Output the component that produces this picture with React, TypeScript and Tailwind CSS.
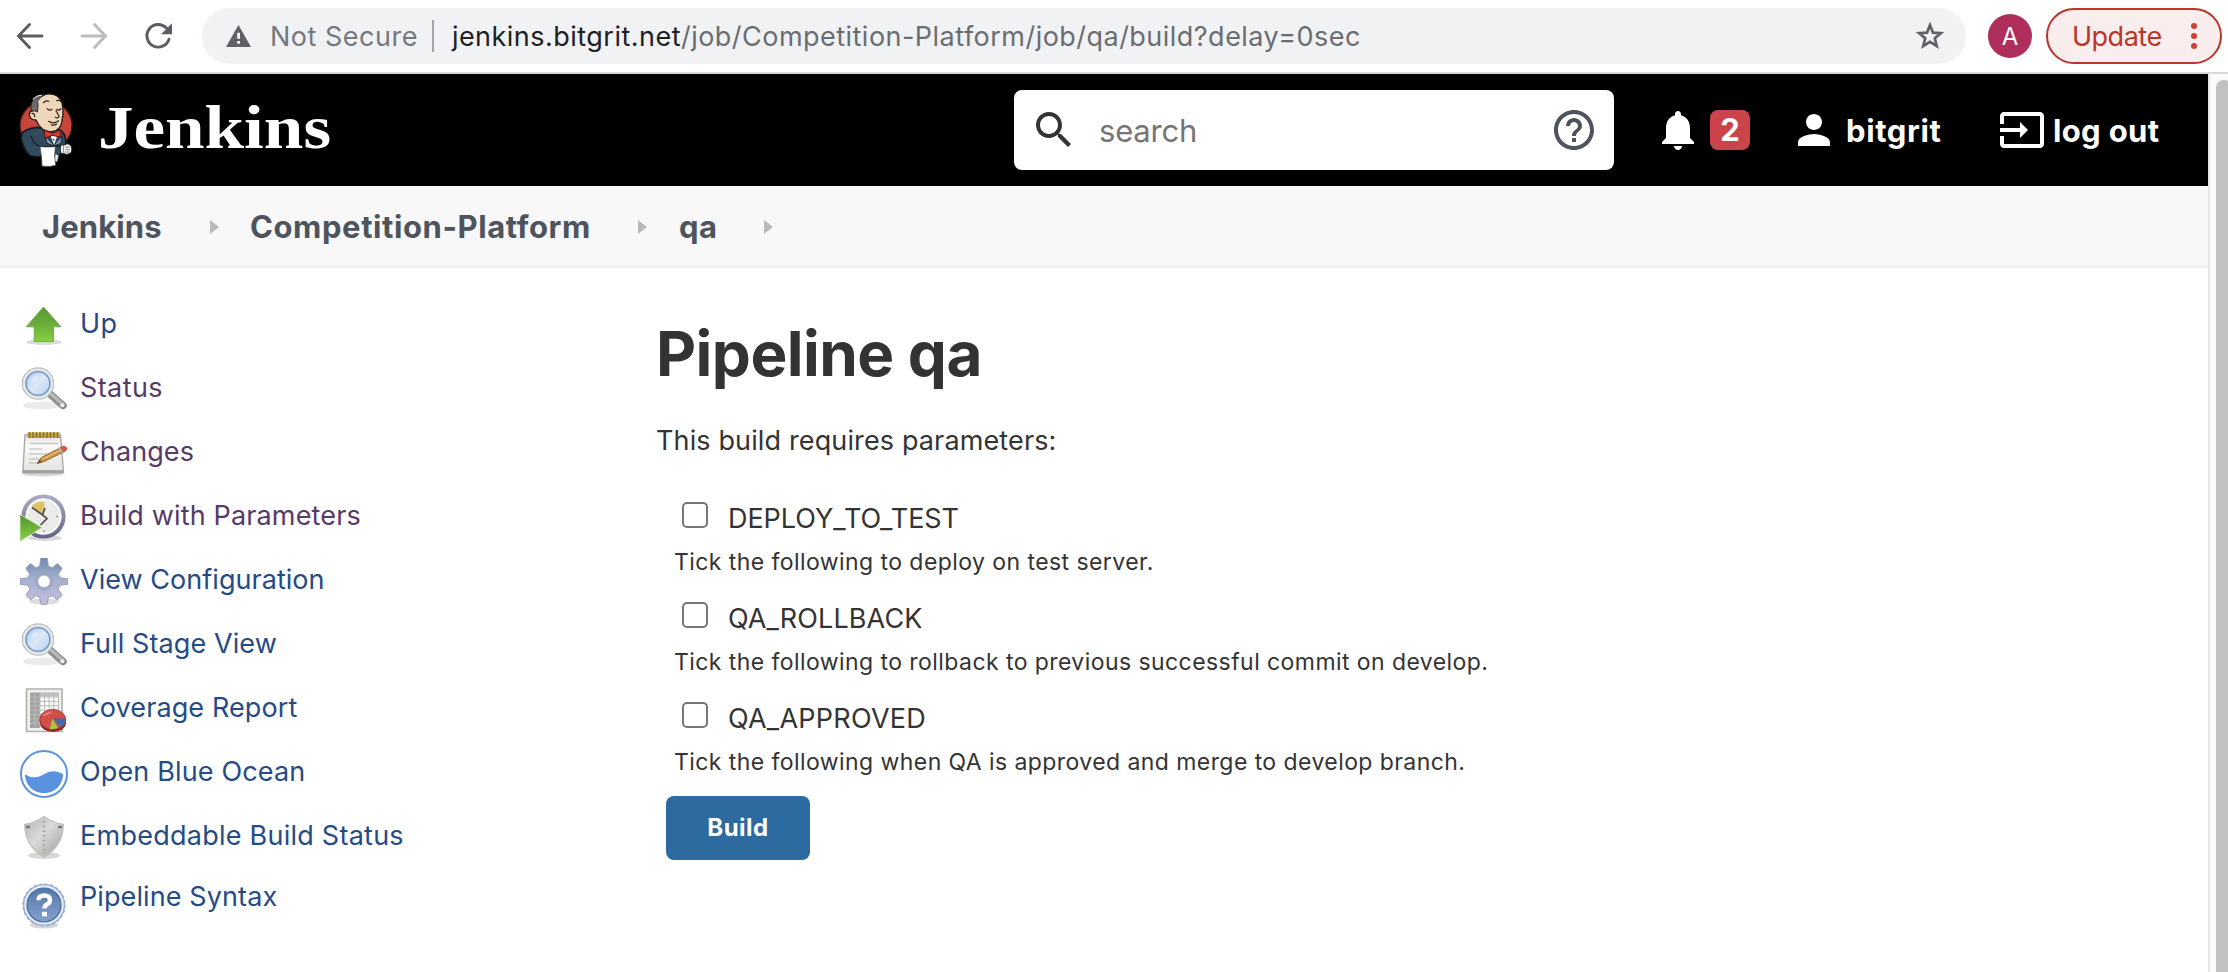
import React from 'react';

const P = {
  search:
    'M15.5 14h-.79l-.28-.27C15.41 12.59 16 11.11 16 9.5 16 5.91 13.09 3 9.5 3S3 5.91 3 9.5 5.91 16 9.5 16c1.61 0 3.09-.59 4.23-1.57l.27.28v.79l5 4.99L20.49 19l-4.99-5zm-6 0C7.01 14 5 11.99 5 9.5S7.01 5 9.5 5 14 7.01 14 9.5 11.99 14 9.5 14z',
  help: 'M11 18h2v-2h-2v2zm1-16C6.48 2 2 6.48 2 12s4.48 10 10 10 10-4.48 10-10S17.52 2 12 2zm0 18c-4.41 0-8-3.59-8-8s3.59-8 8-8 8 3.59 8 8-3.59 8-8 8zm0-14c-2.21 0-4 1.79-4 4h2c0-1.1.9-2 2-2s2 .9 2 2c0 2-3 1.75-3 5h2c0-2.25 3-2.5 3-5 0-2.21-1.79-4-4-4z',
  bell: 'M12 22c1.1 0 2-.9 2-2h-4c0 1.1.89 2 2 2zm6-6v-5c0-3.07-1.64-5.64-4.5-6.32V4c0-.83-.67-1.5-1.5-1.5s-1.5.67-1.5 1.5v.68C7.63 5.36 6 7.92 6 11v5l-2 2v1h16v-1l-2-2z',
  person:
    'M12 12c2.21 0 4-1.79 4-4s-1.79-4-4-4-4 1.79-4 4 1.79 4 4 4zm0 2c-2.67 0-8 1.34-8 4v2h16v-2c0-2.66-5.33-4-8-4z',
  logout:
    'M21 3.01H3c-1.1 0-2 .9-2 2V9h2V4.99h18v14.03H3V15H1v4.01c0 1.1.9 1.98 2 1.98h18c1.1 0 2-.88 2-1.98v-14c0-1.11-.9-2-2-2zM11 16l4-4-4-4v3H1v2h10v3z',
};

function Glyph({ d, className }: { d: string; className: string }) {
  return (
    <svg viewBox="0 0 24 24" className={`size-12 shrink-0 ${className}`} fill="currentColor">
      <path d={d} />
    </svg>
  );
}

function BrowserBar() {
  return (
    <div className="flex h-[74px] shrink-0 items-center border-b-2 border-[#d9d9de] bg-white pl-4 text-[27px]">
      <svg viewBox="0 0 28 28" className="size-7 shrink-0" fill="none" stroke="#5a5e63" strokeWidth="2.9" strokeLinecap="round">
        <path d="M26 14H3M13.5 2.5 2.5 14l11 11.500" />
      </svg>
      <svg viewBox="0 0 28 28" className="ml-9 size-7 shrink-0" fill="none" stroke="#babcbe" strokeWidth="2.900" strokeLinecap="round">
        <path d="M2 14h23M14.500 2.500 25.500 14l-11 11.500" />
      </svg>
      <svg viewBox="0 0 28 28" className="ml-9 size-7 shrink-0" fill="none" stroke="#5a5e63" strokeWidth="2.900">
        <path d="M25 17.200A11.300 11.300 0 1 1 22 5.600L25 8.500" strokeLinecap="round" />
        <path d="M28 1.200V12.200H17z" fill="#5a5e63" stroke="none" />
      </svg>
      <div className="ml-[30px] flex h-14 w-[1764px] shrink-0 items-center rounded-full bg-[#f1f2f4] pl-6 pr-5">
        <svg viewBox="0 0 25 22" className="h-[22px] w-[25px] shrink-0">
          <path d="M12.500 0 25 22H0z" fill="#5f6265" />
          <path d="M11.200 7.800h2.800v6h-2.800zM11.200 16h2.800v2.800h-2.800z" fill="#f1f2f4" />
        </svg>
        <span className="ml-[19px] pt-0.5 tracking-[0.5px] text-[#75787c]">Not Secure</span>
        <span className="ml-3.5 h-8 w-0.5 bg-[#a3a6aa]" />
        <span className="ml-[18px] flex-1 whitespace-nowrap pt-0.5 tracking-[0.475px] text-[#6a6d71]">
          <span className="text-[#202124]">jenkins.bitgrit.net</span>
          /job/Competition-Platform/job/qa/build?delay=0sec
        </span>
        <svg viewBox="0 0 32 32" className="size-8 shrink-0" fill="none" stroke="#5f6368" strokeWidth="2.700">
          <path d="M16 5.200l2.950 7.400 7.950.55-6.100 5.100 1.950 7.750L16 21.800 9.250 26l1.950-7.750-6.100-5.100 7.950-.55z" />
        </svg>
      </div>
      <div className="ml-[22px] flex size-11 shrink-0 items-center justify-center rounded-full bg-[#b02e5b] pt-px text-2xl text-white">A</div>
      <div className="ml-3.5 flex h-14 w-[176px] shrink-0 items-center justify-between rounded-full border-2 border-[#ba3529] bg-[#f9eded] pl-6 pr-[23px]">
        <span className="pt-[3px] tracking-[-0.5px] text-[#b8362a]">Update</span>
        <span className="flex flex-col gap-1">
          <span className="size-1.5 rounded-full bg-[#cd3f31]" />
          <span className="size-1.5 rounded-full bg-[#cd3f31]" />
          <span className="size-1.5 rounded-full bg-[#cd3f31]" />
        </span>
      </div>
    </div>
  );
}

function Butler() {
  return (
    <svg viewBox="0 0 240 252" className="-mt-1 h-[84px] w-20 shrink-0" strokeLinejoin="round" strokeLinecap="round">
      <ellipse cx="108" cy="118" rx="78" ry="74" fill="#c9453b" stroke="#3a1c1a" strokeWidth="4" />
      <path d="M50 200Q30 160 35 146Q40 130 78 124L150 132Q168 140 168 176L160 200L142 210L96 212Q58 214 54 202Z" fill="#33495d" stroke="#161b21" strokeWidth="5" />
      <path d="M106 150L132 178L156 150L152 172L132 180L112 172Z" fill="#7fa3bd" stroke="#1d2b38" strokeWidth="3" />
      <path d="M122 150L132 176L142 150Z" fill="#fff" />
      <path d="M76 44Q90 24 112 24Q146 22 156 50Q162 78 157 96Q156 124 138 134Q116 142 98 130Q84 118 78 102Q62 102 58 88Q58 74 70 74Z" fill="#edd6b9" stroke="#221c17" strokeWidth="4" />
      <path d="M104 27Q74 30 64 52Q62 66 64 76L74 74L82 78Q86 54 82 46Q90 32 104 27Z" fill="#6e6a6b" stroke="#2a2829" strokeWidth="3" />
      <path d="M70 40Q80 28 94 28" fill="none" stroke="#dddada" strokeWidth="4" />
      <path d="M100 50Q108 42 116 46M140 44Q148 40 154 48M112 68Q118 76 126 70M140 70Q148 76 153 68M138 74L148 92Q142 98 136 94M116 106Q130 116 146 104M124 116Q132 120 140 114M66 82Q74 82 74 92" fill="none" stroke="#2a211b" strokeWidth="3.500" />
      <path d="M104 132L128 142L150 132L152 154L128 148L106 156Z" fill="#d5382f" stroke="#5b1613" strokeWidth="3" />
      <circle cx="131" cy="161" r="2.500" fill="#222" />
      <path d="M62 150Q74 178 92 182L152 180" fill="none" stroke="#18212b" strokeWidth="4" />
      <path d="M136 204L146 208L142 228L134 226Z" fill="#e8e8e8" stroke="#444" strokeWidth="1.500" />
      <path d="M90 182Q112 184 136 182Q131 210 137 238Q118 244 96 240Q96 210 90 182Z" fill="#fff" stroke="#444" strokeWidth="2" />
      <path d="M152 178Q158 176 162 177L172 173Q180 174 184 181Q187 190 184 199Q178 206 168 205L152 201Q149 190 152 178Z" fill="#f2f2f2" stroke="#222" strokeWidth="3" />
      <path d="M161 178Q158 190 162 203M168 184L178 183M168 191L178 191M168 198L177 198" stroke="#555" strokeWidth="2" fill="none" />
    </svg>
  );
}

function Header() {
  return (
    <header className="flex h-28 shrink-0 items-center bg-black pl-2.5 text-[31px] font-bold text-white">
      <Butler />
      <div className="w-[924px] pb-1 pl-2">
        <span className="inline-block origin-left scale-x-[1.165] font-['Liberation_Serif',serif] text-[61px] font-bold leading-[76px]">
          Jenkins
        </span>
      </div>
      <div className="flex h-20 w-[600px] shrink-0 items-center rounded-lg bg-white px-4 font-normal">
        <Glyph d={P.search} className="text-[#333]" />
        <span className="ml-[21px] flex-1 pt-0.5 tracking-[-0.2px] text-[#757575]">search</span>
        <Glyph d={P.help} className="text-[#4d545d]" />
      </div>
      <Glyph d={P.bell} className="ml-10" />
      <span className="ml-2 flex h-10 w-10 items-center justify-center rounded-lg bg-[#cc444b] pt-px">2</span>
      <Glyph d={P.person} className="ml-10" />
      <span className="ml-2 w-24 whitespace-nowrap pt-0.5 tracking-[0.6px]">bitgrit</span>
      <Glyph d={P.logout} className="ml-14" />
      <span className="ml-[7px] whitespace-nowrap pt-0.5 tracking-[0.35px]">log out</span>
    </header>
  );
}

function Chevron() {
  return (
    <svg viewBox="0 0 9 14" className="ml-[46px] mr-[31px] h-3.5 w-[9px] shrink-0">
      <path d="M0 0 9 7 0 14z" fill="#b9b9b9" />
    </svg>
  );
}

function Breadcrumbs() {
  return (
    <nav className="flex h-[82px] shrink-0 items-center border-b-2 border-[#edeff1] bg-[#f8f8f8] pl-[42px] pt-0.5 text-[31px] font-bold text-[#4d545d]">
      <span className="w-[122px] whitespace-nowrap tracking-[0.1px]">Jenkins</span>
      <Chevron />
      <span className="w-[342px] whitespace-nowrap tracking-[0.58px]">Competition-Platform</span>
      <Chevron />
      <span className="w-10 whitespace-nowrap pl-px tracking-[0.5px]">qa</span>
      <Chevron />
    </nav>
  );
}

const svgBox = 'size-12 shrink-0 overflow-visible';

function UpIcon() {
  return (
    <svg viewBox="0 0 48 48" className={svgBox}>
      <defs>
        <linearGradient id="up" x1="0" y1="0" x2="0" y2="1">
          <stop offset="0" stopColor="#5a9a32" />
          <stop offset=".45" stopColor="#68a93a" />
          <stop offset="1" stopColor="#86cf3e" />
        </linearGradient>
      </defs>
      <ellipse cx="24" cy="40" rx="18" ry="3" fill="#000" opacity=".14" />
      <path d="M23.500 5 41 24.800H33.500V39.500H14.200V24.800H6.300z" fill="url(#up)" stroke="#6fae4c" strokeWidth="1" />
    </svg>
  );
}

function LensIcon() {
  return (
    <svg viewBox="0 0 48 48" className={svgBox}>
      <defs>
        <linearGradient id="lens" x1="0" y1="0" x2="1" y2="1">
          <stop offset="0" stopColor="#a9c8ee" />
          <stop offset=".5" stopColor="#dbe8f7" />
          <stop offset="1" stopColor="#b3cdec" />
        </linearGradient>
      </defs>
      <ellipse cx="22" cy="39.500" rx="19" ry="4" fill="#000" opacity=".08" />
      <path d="M30 28 43 39.500" stroke="#8d8d8d" strokeWidth="7.500" strokeLinecap="round" />
      <path d="M30.500 27.500 43 38.500" stroke="#b9b9b9" strokeWidth="3.500" strokeLinecap="round" />
      <circle cx="42.300" cy="39.300" r="2" fill="#eee" />
      <circle cx="18" cy="17.500" r="14" fill="url(#lens)" stroke="#bcbdbb" strokeWidth="4.500" />
      <circle cx="18" cy="17.500" r="14" fill="none" stroke="#e9e9e7" strokeWidth="2.200" />
      <circle cx="18" cy="17.500" r="11.800" fill="none" stroke="#7ba2d6" strokeWidth="1.600" />
      <path d="M10 17Q12 9 20 9Q17 15 10 17Z" fill="#fff" opacity=".35" />
    </svg>
  );
}

function NotepadIcon() {
  return (
    <svg viewBox="0 0 48 48" className={svgBox}>
      <defs>
        <linearGradient id="page" x1="0" y1="0" x2="0" y2="1">
          <stop offset="0" stopColor="#e4e4e2" />
          <stop offset=".3" stopColor="#fafafa" />
          <stop offset="1" stopColor="#e2e2e0" />
        </linearGradient>
      </defs>
      <ellipse cx="23" cy="44" rx="20" ry="2.500" fill="#000" opacity=".15" />
      <path d="M5 5H40.500L43.500 42.500H2.800z" fill="url(#page)" stroke="#a9a9a6" strokeWidth="1.400" />
      <path d="M3 40H43.300V43.500H2.600z" fill="#a5a5a2" />
      <path d="M7.500 2.500H40V8H7.500z" fill="#c2a745" />
      <path d="M9.500 2v6M13 2v6M16.500 2v6M20 2v6M23.500 2v6M27 2v6M30.500 2v6M34 2v6M37.500 2v6" stroke="#8b742a" strokeWidth="1.500" />
      <path d="M10 13.500H38M9.500 19H22M9.500 24H32M9 29H19M9 33H16" stroke="#c9c9c6" strokeWidth="1.700" />
      <path d="M17 33.500 21.500 27.500 42 17 45.500 21 24 31.500z" fill="#cf9446" stroke="#8f6a30" strokeWidth="1" />
      <path d="M22.500 29.200 43 18.700" stroke="#e8bd78" strokeWidth="1.300" />
      <path d="M39.500 17.500 43.500 15.500Q47.500 16.500 47.500 19.500L43 22.200z" fill="#d9544b" />
      <path d="M38 18.200 41.500 23 43.300 22 39.800 17.300z" fill="#b5b5b0" />
      <path d="M17 33.500 20 29 21.500 32.500z" fill="#6a5430" />
    </svg>
  );
}

function ClockIcon() {
  return (
    <svg viewBox="0 0 48 48" className={svgBox}>
      <defs>
        <linearGradient id="rim" x1="0" y1="0" x2="0" y2="1">
          <stop offset="0" stopColor="#a9a9c2" />
          <stop offset="1" stopColor="#66668a" />
        </linearGradient>
        <linearGradient id="go" x1="0" y1="0" x2="0" y2="1">
          <stop offset="0" stopColor="#4f9327" />
          <stop offset="1" stopColor="#8ad04d" />
        </linearGradient>
      </defs>
      <ellipse cx="25" cy="44" rx="17" ry="3" fill="#000" opacity=".15" />
      <circle cx="23.500" cy="22.500" r="20" fill="#ebebe9" stroke="url(#rim)" strokeWidth="4.200" />
      <circle cx="23.500" cy="22.500" r="17.200" fill="none" stroke="#fff" strokeWidth="1.500" />
      <path d="M24 21.500 11.500 12Q17 6.500 24.500 8z" fill="#dfc165" />
      <path d="M12 13.500 22 20.500M25 14 22.500 21L27 24.500 20.500 31" fill="none" stroke="#50504c" strokeWidth="1.700" />
      <path d="M36 22.500h2M24 36v2" stroke="#999" strokeWidth="1.500" />
      <path d="M0 20.500 22 33.500 0 47.500z" fill="url(#go)" stroke="#d5ecc4" strokeWidth=".8" />
    </svg>
  );
}

function GearIcon() {
  return (
    <svg viewBox="0 0 48 48" className="size-12 shrink-0">
      <defs>
        <linearGradient id="gear" x1="0" y1="0" x2="0" y2="1">
          <stop offset="0" stopColor="#6f87b0" />
          <stop offset=".45" stopColor="#a3b1cd" />
          <stop offset="1" stopColor="#c3bfdd" />
        </linearGradient>
      </defs>
      <ellipse cx="24" cy="43.500" rx="15" ry="3" fill="#000" opacity=".14" />
      <path
        fillRule="evenodd"
        d="M20.800 0H27.200L28.400 8.200 32.300 9.800 37.300 5.500 42.200 10.300 38.300 16 39.900 19.700 48 20.800V26.200L39.900 27.300 38.300 31.300 42.200 37.200 37.300 42 32.300 37.800 28.400 39.300 27 46.300H21L19.600 39.300 15.700 37.800 10.700 42 5.800 37.200 9.700 31.300 8.100 27.300 0 26.200V20.800L8.100 19.700 9.700 16 5.800 10.300 10.700 5.500 15.700 9.800 19.600 8.200zM24 17A6.300 6.300 0 1 0 24 29.600 6.300 6.300 0 1 0 24 17z"
        fill="url(#gear)"
        stroke="#8d94b3"
        strokeWidth=".8"
        strokeLinejoin="round"
      />
      <circle cx="24" cy="23.300" r="8.300" fill="none" stroke="#98a1c1" strokeWidth="1.200" />
    </svg>
  );
}

function ReportIcon() {
  return (
    <svg viewBox="0 0 48 48" className={svgBox}>
      <path d="M6.500 3H42V45.500H6.500z" fill="#f1f1ef" stroke="#b0b0ad" strokeWidth="1.600" />
      <path d="M10 6.500H38.500V42H10z" fill="#fbfbfa" />
      <path d="M10 6.500H20V42H10z" fill="#a3a3a1" />
      <path d="M20 6.500H38.500V10.500H20z" fill="#bcbcba" />
      <path d="M10 11H38.500M10 15.400H38.500M10 19.800H38.500M10 24.200H38.500M10 28.600H38.500M10 33H38.500M10 37.400H38.500M15 6.500V42M20 6.500V42M24.600 6.500V42M29.200 6.500V42M33.800 6.500V42M38.500 6.500V42" stroke="#b9b9b7" strokeWidth="1" />
      <ellipse cx="33" cy="36.500" rx="13" ry="9.500" fill="#8f2622" />
      <ellipse cx="32.700" cy="33.500" rx="13" ry="10" fill="#d34d49" stroke="#a82f2b" strokeWidth=".9" />
      <path d="M32.700 32.500 45.700 32.500Q46 38 40.500 41z" fill="#4369ae" />
      <path d="M32.700 32.500 38 42Q34 43.500 29.500 43z" fill="#9ccb3f" />
      <path d="M22 30Q26 25 33 25.500Q28 30 22 30Z" fill="#f08a84" opacity=".7" />
    </svg>
  );
}

function OceanIcon() {
  return (
    <svg viewBox="0 0 48 48" className={svgBox}>
      <circle cx="24" cy="24" r="23" fill="#fff" stroke="#5c94e0" strokeWidth="2" />
      <path d="M4.900 24.200Q11 28.500 18.500 26.800C26 24.500 31 17.500 43.100 24.200A19.100 19.100 0 0 1 4.900 24.200z" fill="#5b92df" />
    </svg>
  );
}

function ShieldIcon() {
  return (
    <svg viewBox="0 0 48 48" className={svgBox}>
      <defs>
        <linearGradient id="shield" x1="0" y1="0" x2="1" y2="1">
          <stop offset="0" stopColor="#b3b4b0" />
          <stop offset=".45" stopColor="#dadbd8" />
          <stop offset="1" stopColor="#9a9c97" />
        </linearGradient>
      </defs>
      <ellipse cx="24" cy="41.500" rx="16" ry="3.500" fill="#000" opacity=".16" />
      <path d="M24 2.500Q32 8.500 43.300 10.500Q43 32 24 43Q5 32 4.700 10.500Q16 8.500 24 2.500Z" fill="url(#shield)" stroke="#c0c1bd" strokeWidth="1.400" />
      <path d="M24 7V39" stroke="#a5a7a2" strokeWidth="3" strokeDasharray="1.500 3.200" />
      <path d="M6 13h4M38 13h4" stroke="#777974" strokeWidth="2.500" />
    </svg>
  );
}

function HelpBadgeIcon() {
  return (
    <svg viewBox="0 0 48 48" className="mt-1 size-12 shrink-0 overflow-visible">
      <defs>
        <linearGradient id="badge" x1="0" y1="0" x2="0" y2="1">
          <stop offset="0" stopColor="#5577ac" />
          <stop offset="1" stopColor="#84a2cd" />
        </linearGradient>
      </defs>
      <ellipse cx="24" cy="43" rx="14" ry="3.500" fill="#000" opacity=".16" />
      <circle cx="24" cy="23" r="20.400" fill="#e9eff8" stroke="#a9bcdb" strokeWidth="1.800" />
      <circle cx="24" cy="23" r="21" fill="none" stroke="#8fa8cf" strokeWidth="1.200" strokeDasharray="2.750 2.750" />
      <circle cx="24" cy="23" r="17" fill="url(#badge)" stroke="#48699f" strokeWidth="1.200" />
      <path d="M18.500 18.300Q18.500 13.500 24.200 13.500Q30 13.500 30 18Q30 21 26.500 22.700Q24.500 23.800 24.500 26.500" fill="none" stroke="#fff" strokeWidth="4.500" />
      <path d="M22 29.800h5v4.600h-5z" fill="#fff" />
    </svg>
  );
}

const link = 'text-[#254b87]';
const seen = 'text-[#563a67]';

const tasks = [
  { Icon: UpIcon, label: 'Up', cls: `${link} leading-[44px] tracking-[0.3px]` },
  { Icon: LensIcon, label: 'Status', cls: `${seen} leading-[44px] tracking-[0.4px]` },
  { Icon: NotepadIcon, label: 'Changes', cls: `${seen} leading-[44px] tracking-[0.1px]` },
  { Icon: ClockIcon, label: 'Build with Parameters', cls: `${seen} leading-[44px] tracking-[0.15px]` },
  { Icon: GearIcon, label: 'View Configuration', cls: `${link} leading-[44px] tracking-[0.04px]` },
  { Icon: LensIcon, label: 'Full Stage View', cls: `${link} leading-[44px] tracking-[0.09px]` },
  { Icon: ReportIcon, label: 'Coverage Report', cls: `${link} leading-[44px] tracking-[0.1px]` },
  { Icon: OceanIcon, label: 'Open Blue Ocean', cls: `${link} leading-[44px] tracking-[0.15px]` },
  { Icon: ShieldIcon, label: 'Embeddable Build Status', cls: `${link} leading-[44px] tracking-[0.25px]` },
  { Icon: HelpBadgeIcon, label: 'Pipeline Syntax', cls: `${link} leading-[38px] tracking-[0.1px]` },
];

const params = [
  { name: 'DEPLOY_TO_TEST', cls: 'tracking-[-0.05px]', text: 'Tick the following to deploy on test server.' },
  { name: 'QA_ROLLBACK', cls: 'tracking-[0.1px]', text: 'Tick the following to rollback to previous successful commit on develop.' },
  { name: 'QA_APPROVED', cls: 'tracking-[0.25px]', text: 'Tick the following when QA is approved and merge to develop branch.' },
];

export default function App() {
  return (
    <div className="flex h-[972px] w-[2228px] flex-col overflow-hidden bg-white font-['Inter',sans-serif]">
      <BrowserBar />
      <div className="flex min-h-0 flex-1">
        <div className="flex w-[2208px] shrink-0 flex-col">
          <Header />
          <Breadcrumbs />
          <div className="flex text-[27px]">
            <aside className="flex w-[656px] shrink-0 flex-col gap-4 pl-5 pt-[34px]">
              {tasks.map(({ Icon, label, cls }) => (
                <a key={label} className="flex h-12 items-start">
                  <Icon />
                  <span className={`ml-3 whitespace-nowrap ${cls}`}>{label}</span>
                </a>
              ))}
            </aside>
            <main className="flex flex-col items-start pt-[46px] text-[#333]">
              <h1 className="text-[62px] font-bold leading-[79px] tracking-[-0.55px]">Pipeline qa</h1>
              <p className="mb-[37px] mt-7 leading-10 tracking-[0.13px]">This build requires parameters:</p>
              {params.map((p) => (
                <div key={p.name} className="mb-[13px]">
                  <label className="flex items-start pl-[26px] leading-[42px]">
                    <span className="mt-1 size-[26px] rounded-[5px] border-2 border-[#767676] bg-white" />
                    <span className={`ml-5 ${p.cls}`}>{p.name}</span>
                  </label>
                  <p className="whitespace-nowrap pl-[18px] text-[23px] leading-[45px] tracking-[0.43px]">{p.text}</p>
                </div>
              ))}
              <button className="-mt-0.5 ml-2.5 h-16 w-36 rounded-lg bg-[#2d6a9f] text-2xl font-bold tracking-[0.5px] text-white">
                Build
              </button>
            </main>
          </div>
        </div>
        <div className="flex-1 overflow-hidden border-l-2 border-[#e6e6e6] bg-[#fafafa] pl-1.5 pt-1.5">
          <div className="h-[960px] w-4 rounded-full bg-[#c1c1c1]" />
        </div>
      </div>
    </div>
  );
}
